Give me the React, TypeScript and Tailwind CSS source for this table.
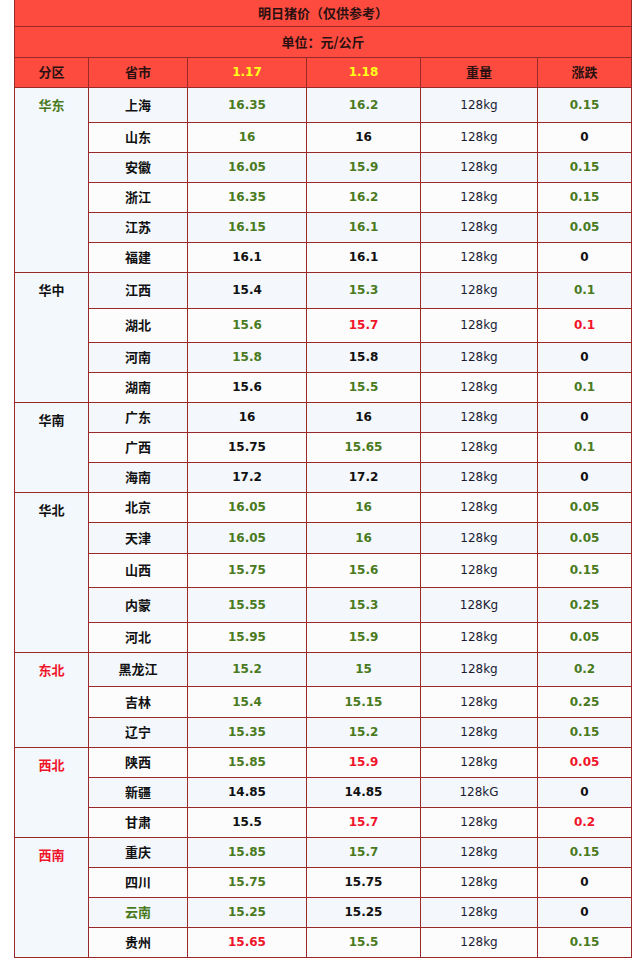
import React from "react";

type C = "g" | "r" | "k";

interface Row {
  city: string;
  cityColor?: C;
  a: string;
  ac: C;
  b: string;
  bc: C;
  w?: string;
  d: string;
  dc: C;
  h: number;
}

interface Zone {
  name: string;
  color: C;
  rows: Row[];
}

const zones: Zone[] = [
  {
    name: "华东",
    color: "g",
    rows: [
      { city: "上海", a: "16.35", ac: "g", b: "16.2", bc: "g", d: "0.15", dc: "g", h: 35 },
      { city: "山东", a: "16", ac: "g", b: "16", bc: "k", d: "0", dc: "k", h: 30 },
      { city: "安徽", a: "16.05", ac: "g", b: "15.9", bc: "g", d: "0.15", dc: "g", h: 30 },
      { city: "浙江", a: "16.35", ac: "g", b: "16.2", bc: "g", d: "0.15", dc: "g", h: 30 },
      { city: "江苏", a: "16.15", ac: "g", b: "16.1", bc: "g", d: "0.05", dc: "g", h: 30 },
      { city: "福建", a: "16.1", ac: "k", b: "16.1", bc: "k", d: "0", dc: "k", h: 30 },
    ],
  },
  {
    name: "华中",
    color: "k",
    rows: [
      { city: "江西", a: "15.4", ac: "k", b: "15.3", bc: "g", d: "0.1", dc: "g", h: 36 },
      { city: "湖北", a: "15.6", ac: "g", b: "15.7", bc: "r", d: "0.1", dc: "r", h: 34 },
      { city: "河南", a: "15.8", ac: "g", b: "15.8", bc: "k", d: "0", dc: "k", h: 30 },
      { city: "湖南", a: "15.6", ac: "k", b: "15.5", bc: "g", d: "0.1", dc: "g", h: 30 },
    ],
  },
  {
    name: "华南",
    color: "k",
    rows: [
      { city: "广东", a: "16", ac: "k", b: "16", bc: "k", d: "0", dc: "k", h: 30 },
      { city: "广西", a: "15.75", ac: "k", b: "15.65", bc: "g", d: "0.1", dc: "g", h: 30 },
      { city: "海南", a: "17.2", ac: "k", b: "17.2", bc: "k", d: "0", dc: "k", h: 30 },
    ],
  },
  {
    name: "华北",
    color: "k",
    rows: [
      { city: "北京", a: "16.05", ac: "g", b: "16", bc: "g", d: "0.05", dc: "g", h: 30 },
      { city: "天津", a: "16.05", ac: "g", b: "16", bc: "g", d: "0.05", dc: "g", h: 31 },
      { city: "山西", a: "15.75", ac: "g", b: "15.6", bc: "g", d: "0.15", dc: "g", h: 34 },
      { city: "内蒙", a: "15.55", ac: "g", b: "15.3", bc: "g", w: "128Kg", d: "0.25", dc: "g", h: 35 },
      { city: "河北", a: "15.95", ac: "g", b: "15.9", bc: "g", d: "0.05", dc: "g", h: 30 },
    ],
  },
  {
    name: "东北",
    color: "r",
    rows: [
      { city: "黑龙江", a: "15.2", ac: "g", b: "15", bc: "g", d: "0.2", dc: "g", h: 34 },
      { city: "吉林", a: "15.4", ac: "g", b: "15.15", bc: "g", d: "0.25", dc: "g", h: 31 },
      { city: "辽宁", a: "15.35", ac: "g", b: "15.2", bc: "g", d: "0.15", dc: "g", h: 30 },
    ],
  },
  {
    name: "西北",
    color: "r",
    rows: [
      { city: "陕西", a: "15.85", ac: "g", b: "15.9", bc: "r", d: "0.05", dc: "r", h: 30 },
      { city: "新疆", a: "14.85", ac: "k", b: "14.85", bc: "k", w: "128kG", d: "0", dc: "k", h: 30 },
      { city: "甘肃", a: "15.5", ac: "k", b: "15.7", bc: "r", d: "0.2", dc: "r", h: 30 },
    ],
  },
  {
    name: "西南",
    color: "r",
    rows: [
      { city: "重庆", a: "15.85", ac: "g", b: "15.7", bc: "g", d: "0.15", dc: "g", h: 30 },
      { city: "四川", a: "15.75", ac: "g", b: "15.75", bc: "k", d: "0", dc: "k", h: 30 },
      { city: "云南", cityColor: "g", a: "15.25", ac: "g", b: "15.25", bc: "k", d: "0", dc: "k", h: 30 },
      { city: "贵州", a: "15.65", ac: "r", b: "15.5", bc: "g", d: "0.15", dc: "g", h: 30 },
    ],
  },
];

const colorClass: Record<C, string> = {
  g: "text-[#4a7a1e]",
  r: "text-[#f0142a]",
  k: "text-[#111111]",
};

const cjk = "font-['Microsoft_YaHei','Noto_Sans_CJK_SC',sans-serif]";
const num = "font-['DejaVu_Sans',Verdana,sans-serif]";
const cell = "border border-[#9a2a2a] text-center align-middle p-0";

export default function App() {
  let idx = 0;
  return (
    <div className="w-[640px] min-h-[966px] bg-white">
      <table className="ml-[14px] w-[617px] border-collapse table-fixed">
        <colgroup>
          <col className="w-[74px]" />
          <col className="w-[99px]" />
          <col className="w-[119px]" />
          <col className="w-[114px]" />
          <col className="w-[117px]" />
          <col className="w-[94px]" />
        </colgroup>
        <thead>
          <tr className="h-[26px] bg-[#fd4c3f]">
            <td colSpan={6} className={`${cell} border-t-0 text-[13px] font-bold text-[#2a1010] ${cjk}`}>
              明日猪价（仅供参考）
            </td>
          </tr>
          <tr className="h-[31px] bg-[#fd4c3f]">
            <td colSpan={6} className={`${cell} text-[13px] font-bold text-[#2a1010] ${cjk}`}>
              单位：元/公斤
            </td>
          </tr>
          <tr className="h-[30px] bg-[#fd4c3f]">
            <td className={`${cell} text-[13px] font-bold text-[#2a1010] ${cjk}`}>分区</td>
            <td className={`${cell} text-[13px] font-bold text-[#2a1010] ${cjk}`}>省市</td>
            <td className={`${cell} text-[12px] font-bold text-[#ffff1a] ${num}`}>1.17</td>
            <td className={`${cell} text-[12px] font-bold text-[#ffff1a] ${num}`}>1.18</td>
            <td className={`${cell} text-[13px] font-bold text-[#2a1010] ${cjk}`}>重量</td>
            <td className={`${cell} text-[13px] font-bold text-[#2a1010] ${cjk}`}>涨跌</td>
          </tr>
        </thead>
        <tbody>
          {zones.map((z) =>
            z.rows.map((r, i) => {
              const bg = idx++ % 2 === 0 ? "bg-[#f4f8fd]" : "bg-[#fcfcfd]";
              return (
                <tr key={z.name + r.city} className={bg} style={{ height: r.h }}>
                  {i === 0 && (
                    <td
                      rowSpan={z.rows.length}
                      className={`${cell} align-top bg-[#f3f8fd] text-[13px] font-bold ${cjk} ${colorClass[z.color]}`}
                    >
                      <div className="pt-[7px] leading-[20px]">{z.name}</div>
                    </td>
                  )}
                  <td className={`${cell} text-[13px] font-bold ${cjk} ${colorClass[r.cityColor ?? "k"]}`}>
                    {r.city}
                  </td>
                  <td className={`${cell} text-[12px] font-bold ${num} ${colorClass[r.ac]}`}>{r.a}</td>
                  <td className={`${cell} text-[12px] font-bold ${num} ${colorClass[r.bc]}`}>{r.b}</td>
                  <td className={`${cell} text-[12px] text-[#1a1a33] ${num}`}>{r.w ?? "128kg"}</td>
                  <td className={`${cell} text-[12px] font-bold ${num} ${colorClass[r.dc]}`}>{r.d}</td>
                </tr>
              );
            })
          )}
        </tbody>
      </table>
    </div>
  );
}
